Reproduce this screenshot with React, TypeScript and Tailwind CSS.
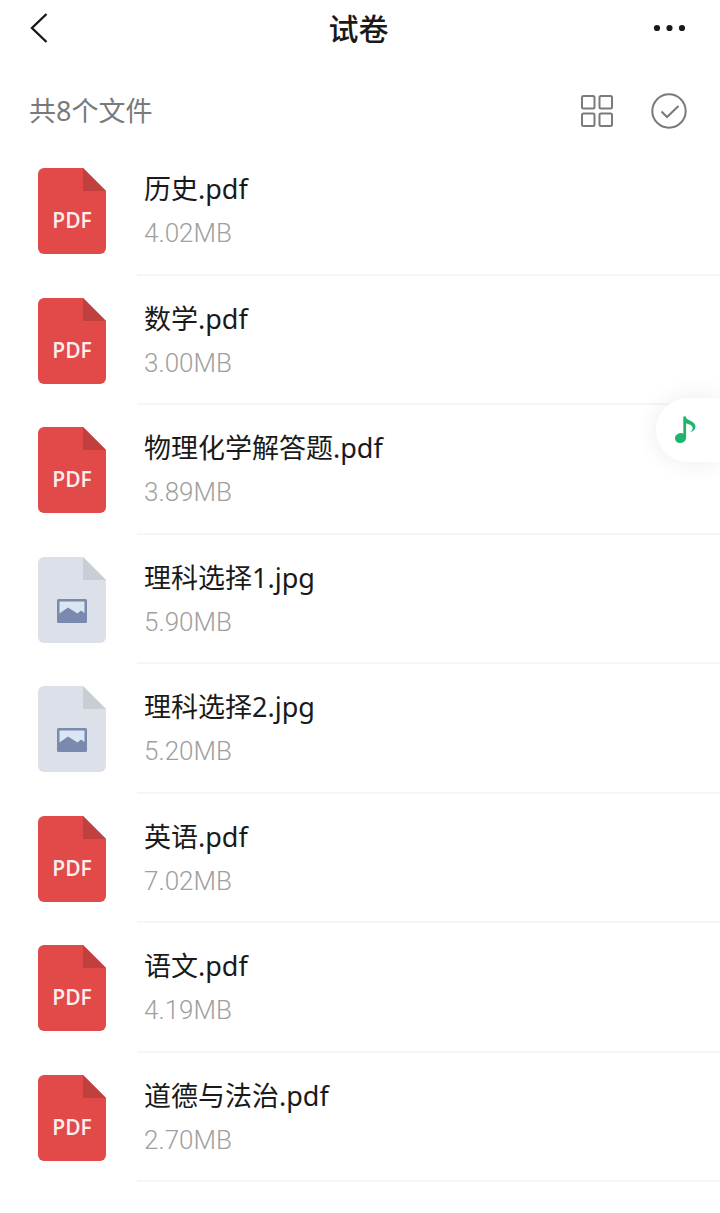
import React from "react";

type FileKind = "pdf" | "jpg";

const files: { name: string; size: string; kind: FileKind }[] = [
  { name: "历史.pdf", size: "4.02MB", kind: "pdf" },
  { name: "数学.pdf", size: "3.00MB", kind: "pdf" },
  { name: "物理化学解答题.pdf", size: "3.89MB", kind: "pdf" },
  { name: "理科选择1.jpg", size: "5.90MB", kind: "jpg" },
  { name: "理科选择2.jpg", size: "5.20MB", kind: "jpg" },
  { name: "英语.pdf", size: "7.02MB", kind: "pdf" },
  { name: "语文.pdf", size: "4.19MB", kind: "pdf" },
  { name: "道德与法治.pdf", size: "2.70MB", kind: "pdf" },
];

const PAGE_SHAPE = "M6 0H45L68 23V80a6 6 0 0 1-6 6H6a6 6 0 0 1-6-6V6a6 6 0 0 1 6-6Z";

const PdfIcon = () => (
  <svg className="h-[86px] w-[68px] shrink-0" viewBox="0 0 68 86" aria-hidden="true">
    <path d={PAGE_SHAPE} fill="#e24a4a" />
    <path d="M45 0L68 23H45Z" fill="#c03f3f" />
    <text
      x="34"
      y="60"
      textAnchor="middle"
      fill="#fdeeee"
      className="font-['Open_Sans',sans-serif] text-[21px] font-semibold"
    >
      PDF
    </text>
  </svg>
);

const ImageIcon = () => (
  <svg className="h-[86px] w-[68px] shrink-0" viewBox="0 0 68 86" aria-hidden="true">
    <path d={PAGE_SHAPE} fill="#dce1e9" />
    <path d="M45 0L68 23H45Z" fill="#c9cdd4" />
    <rect x="19" y="42" width="30" height="24" rx="1.5" fill="#7a89ae" />
    <path d="M21.5 44.5H46.5V56L43 53.5L39.5 56.5L30 50.5L21.5 56.5Z" fill="#dce6f2" />
  </svg>
);

const Header = () => (
  <header className="grid h-14 grid-cols-3 items-center pl-[29px] pr-8">
    <button type="button" aria-label="返回" className="justify-self-start">
      <svg className="h-8 w-5" viewBox="0 0 20 32" fill="none" stroke="#1a1a1a" strokeWidth="2.4">
        <path d="M17.5 2L3 16L17.5 30" />
      </svg>
    </button>
    <h1 className="justify-self-center pt-0.5 text-[30px] leading-10 font-medium">试卷</h1>
    <button type="button" aria-label="更多" className="justify-self-end">
      <svg className="h-8 w-9" viewBox="0 0 36 32" fill="#1a1a1a">
        <circle cx="5" cy="16" r="3.1" />
        <circle cx="17.5" cy="16" r="3.1" />
        <circle cx="30" cy="16" r="3.1" />
      </svg>
    </button>
  </header>
);

const Toolbar = () => (
  <div className="flex h-[90px] items-center justify-between pt-5 pl-[29px] pr-[33px]">
    <p className="text-[27px] leading-9 text-[#7a7a7a]">共8个文件</p>
    <div className="flex items-center gap-[38px] text-[#7a7a7a]">
      <button type="button" aria-label="网格视图">
        <svg className="size-8" viewBox="0 0 32 32" fill="none" stroke="currentColor" strokeWidth="2">
          <rect x="1" y="1" width="12.5" height="12.5" rx="1.5" />
          <rect x="18.5" y="1" width="12.5" height="12.5" rx="1.5" />
          <rect x="1" y="18.5" width="12.5" height="12.5" rx="1.5" />
          <rect x="18.5" y="18.5" width="12.5" height="12.5" rx="1.5" />
        </svg>
      </button>
      <button type="button" aria-label="选择">
        <svg className="size-9" viewBox="0 0 36 36" fill="none" stroke="currentColor" strokeWidth="2">
          <circle cx="18" cy="18" r="16.7" />
          <path d="M10.5 18.5L16 24L27.5 13" />
        </svg>
      </button>
    </div>
  </div>
);

const App = () => {
  return (
    <div className="relative min-h-screen overflow-hidden bg-white font-['Noto_Sans','Noto_Sans_CJK_SC',sans-serif] text-[#1a1a1a]">
      <Header />
      <Toolbar />

      <ul>
        {files.map((file) => (
          <li key={file.name} className="odd:h-[130px] even:h-[129px]">
            <button type="button" className="flex h-full w-full items-center gap-[31px] pl-[38px] text-left">
              {file.kind === "pdf" ? <PdfIcon /> : <ImageIcon />}
              <span className="flex h-full flex-1 flex-col justify-center gap-2 border-b-2 border-[#f6f6f6] pt-0.5 pl-[7px]">
                <span className="text-[27px] leading-9">{file.name}</span>
                <span className="font-['Roboto',sans-serif] text-[26px] leading-9 font-light text-[#a0a0a0]">
                  {file.size}
                </span>
              </span>
            </button>
          </li>
        ))}
      </ul>

      {/* floating music player */}
      <button
        type="button"
        aria-label="音乐"
        className="absolute top-[398px] right-0 flex h-16 w-16 items-center rounded-l-full bg-white pl-4 shadow-[0_0_24px_rgba(0,0,0,0.08)]"
      >
        <svg className="h-8 w-7" viewBox="0 0 28 32" fill="none">
          <ellipse cx="8.5" cy="24" rx="5.6" ry="5" transform="rotate(-15 8.5 24)" fill="#1fb46c" />
          <path
            d="M12.7 24V2.5"
            stroke="#1fb46c"
            strokeWidth="2.8"
          />
          <path
            d="M12.7 2.5C14.5 6.5 23.5 7 23.5 12.5C23.5 15 21.5 17.500 18.500 18C20 16.500 21 15 20.500 13C19.800 10.500 15 10 12.700 8.500Z"
            fill="#1fb46c"
          />
        </svg>
      </button>
    </div>
  );
};

export default App;
